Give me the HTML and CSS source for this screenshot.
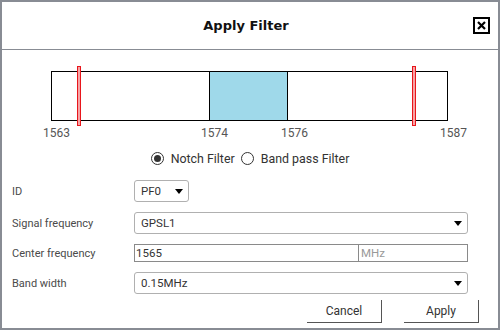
FILE: index.html
```html
<!DOCTYPE html>
<html lang="en">
<head>
    <meta charset="UTF-8">
    <meta name="viewport" content="width=device-width, initial-scale=1.0">
    <title>Apply Filter</title>
    <link rel="stylesheet" href="styles.css">
</head>
<body>

<div class="dialog">
    <div class="dialog-header">
        <h1 class="dialog-title">Apply Filter</h1>
        <button class="close-btn" type="button" aria-label="Close">
            <svg width="9" height="9" viewBox="0 0 9 9"><path d="M1 1 L8 8 M8 1 L1 8" stroke="#000" stroke-width="2.2" fill="none"/></svg>
        </button>
    </div>

    <div class="chart">
        <div class="bar">
            <div class="band" style="left: 157px; width: 79px;"></div>
            <div class="marker" style="left: 25px;"></div>
            <div class="marker" style="left: 360px;"></div>
        </div>
        <div class="scale">
            <span class="tick" style="left: -1px;">1563</span>
            <span class="tick" style="left: 157px;">1574</span>
            <span class="tick" style="left: 237px;">1576</span>
            <span class="tick" style="left: 396px;">1587</span>
        </div>
    </div>

    <div class="filter-type">
        <label class="radio"><span class="radio-dot checked"></span>Notch Filter</label>
        <label class="radio"><span class="radio-dot"></span>Band pass Filter</label>
    </div>

    <div class="form">
        <div class="row">
            <span class="label">ID</span>
            <div class="select select-small">PF0<span class="caret"></span></div>
        </div>
        <div class="row">
            <span class="label">Signal frequency</span>
            <div class="select">GPSL1<span class="caret"></span></div>
        </div>
        <div class="row row-input">
            <span class="label">Center frequency</span>
            <div class="input">
                <span class="input-value">1565</span>
                <span class="input-unit">MHz</span>
            </div>
        </div>
        <div class="row">
            <span class="label">Band width</span>
            <div class="select">0.15MHz<span class="caret"></span></div>
        </div>
    </div>

    <div class="actions">
        <button class="btn" type="button">Cancel</button>
        <button class="btn" type="button">Apply</button>
    </div>
</div>

</body>
</html>
```

FILE: styles.css
```css
body { margin: 0; background: #fff; font-family: Roboto, "Liberation Sans", sans-serif; color: #333; }
.dialog { width: 500px; height: 330px; box-sizing: border-box; border: 2px solid #888c94; background: #fff; }

.dialog-header { height: 48px; box-sizing: border-box; border-bottom: 1px solid #888c94; display: flex; align-items: center; padding: 0 8px 0 17px; }
.dialog-title { flex: 1; margin: 0; text-align: center; font-family: "DejaVu Sans", Verdana, sans-serif; font-size: 13px; font-weight: bold; color: #111; }
.close-btn { width: 17px; height: 17px; box-sizing: border-box; border: 2px solid #000; background: #fff; padding: 0; display: flex; align-items: center; justify-content: center; cursor: pointer; }
.close-btn svg { display: block; }

.chart { margin: 21px 0 0 49px; width: 397px; }
.bar { position: relative; height: 50px; box-sizing: border-box; border: 1px solid #000; }
.band { position: absolute; top: 0; bottom: 0; box-sizing: border-box; background: #9fd9ea; border-left: 1px solid #000; border-right: 1px solid #000; }
.marker { position: absolute; top: -6px; width: 4px; height: 60px; box-sizing: border-box; background: #f6a3a5; border: 1px solid #e8161c; }
.scale { position: relative; height: 16px; margin-top: 5px; }
.tick { position: absolute; top: 0; margin-left: -7px; font-size: 12px; line-height: 14px; color: #555; }

.filter-type { display: flex; justify-content: center; align-items: center; gap: 6px; height: 16px; margin-top: 8px; font-size: 12.4px; color: #333; }
.radio { display: flex; align-items: center; gap: 7px; cursor: pointer; }
.radio-dot { width: 13px; height: 13px; box-sizing: border-box; border: 1px solid #333; border-radius: 50%; display: flex; align-items: center; justify-content: center; }
.radio-dot.checked::after { content: ""; width: 7px; height: 7px; border-radius: 50%; background: #333; }

.form { margin-top: 14px; padding: 0 30px 0 10px; display: flex; flex-direction: column; gap: 10px; }
.row { display: flex; align-items: center; height: 22px; }
.row-input { height: 18px; }
.label { width: 122px; font-size: 11px; color: #4a4a4a; }
.select { flex: 1; height: 22px; box-sizing: border-box; border: 1px solid #b0b0b0; border-radius: 3px; display: flex; align-items: center; justify-content: space-between; padding: 0 5px 0 6px; font-size: 11.5px; color: #333; }
.select-small { flex: none; width: 55px; }
.caret { width: 0; height: 0; border-left: 4.5px solid transparent; border-right: 4.5px solid transparent; border-top: 5px solid #000; }
.input { flex: 1; height: 18px; box-sizing: border-box; border: 1px solid #8a8a8a; display: flex; font-size: 11.5px; }
.input-value { width: 222px; border-right: 1px solid #8a8a8a; padding-left: 1px; line-height: 16px; color: #333; }
.input-unit { flex: 1; padding-left: 2px; line-height: 16px; color: #999; }

.actions { display: flex; justify-content: flex-end; gap: 22px; margin-top: 6px; padding-right: 19px; }
.btn { width: 75px; height: 23px; background: #fff; border: none; border-right: 1px solid #555; border-bottom: 1px solid #555; padding: 0; font-family: Roboto, "Liberation Sans", sans-serif; font-size: 12px; color: #333; cursor: pointer; }
```
